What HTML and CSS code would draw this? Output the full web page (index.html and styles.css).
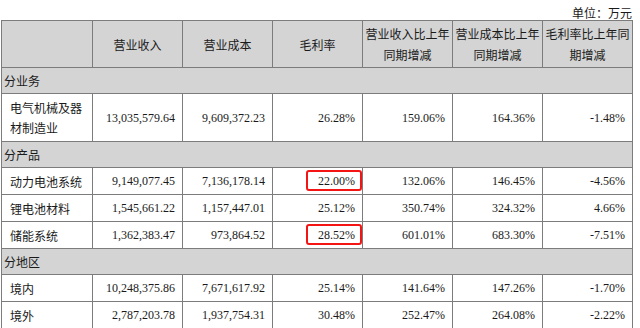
FILE: index.html
```html
<!DOCTYPE html>
<html lang="zh-CN">
<head>
  <meta charset="UTF-8" />
  <title>主营业务分行业、分产品、分地区情况</title>
  <link rel="stylesheet" href="styles.css">
</head>
<body>
  <div class="sheet">
    <div class="unit">单位：万元</div>
    <table class="report">
      <colgroup>
        <col class="c-name">
        <col class="c-num"><col class="c-num"><col class="c-num">
        <col class="c-num"><col class="c-num"><col class="c-num">
      </colgroup>
      <thead>
        <tr>
          <th></th>
          <th>营业收入</th>
          <th>营业成本</th>
          <th>毛利率</th>
          <th>营业收入比上年<br>同期增减</th>
          <th>营业成本比上年<br>同期增减</th>
          <th>毛利率比上年同<br>期增减</th>
        </tr>
      </thead>
      <tbody>
        <tr class="group"><td colspan="7">分业务</td></tr>
        <tr class="tall">
          <td class="name">电气机械及器<br>材制造业</td>
          <td>13,035,579.64</td><td>9,609,372.23</td><td>26.28%</td>
          <td>159.06%</td><td>164.36%</td><td>-1.48%</td>
        </tr>
        <tr class="group"><td colspan="7">分产品</td></tr>
        <tr>
          <td class="name">动力电池系统</td>
          <td>9,149,077.45</td><td>7,136,178.14</td><td><span class="mark">22.00%</span></td>
          <td>132.06%</td><td>146.45%</td><td>-4.56%</td>
        </tr>
        <tr>
          <td class="name">锂电池材料</td>
          <td>1,545,661.22</td><td>1,157,447.01</td><td>25.12%</td>
          <td>350.74%</td><td>324.32%</td><td>4.66%</td>
        </tr>
        <tr>
          <td class="name">储能系统</td>
          <td>1,362,383.47</td><td>973,864.52</td><td><span class="mark">28.52%</span></td>
          <td>601.01%</td><td>683.30%</td><td>-7.51%</td>
        </tr>
        <tr class="group"><td colspan="7">分地区</td></tr>
        <tr>
          <td class="name">境内</td>
          <td>10,248,375.86</td><td>7,671,617.92</td><td>25.14%</td>
          <td>141.64%</td><td>147.26%</td><td>-1.70%</td>
        </tr>
        <tr>
          <td class="name">境外</td>
          <td>2,787,203.78</td><td>1,937,754.31</td><td>30.48%</td>
          <td>252.47%</td><td>264.08%</td><td>-2.22%</td>
        </tr>
      </tbody>
    </table>
  </div>
</body>
</html>
```

FILE: styles.css
```css
body {
  margin: 0;
  background: #ffffff;
  color: #1a1a1a;
  font-family: "Noto Sans CJK SC", sans-serif;
  font-size: 12px;
}
.sheet {
  width: 631px;
  padding-left: 1px;
}
.unit {
  height: 17px;
  padding-top: 3px;
  line-height: 20px;
  text-align: right;
}
.report {
  width: 631px;
  border-collapse: collapse;
  table-layout: fixed;
}
.c-name {
  width: 91px;
}
.c-num {
  width: 90px;
}
.report th,
.report td {
  border: 1px solid #7c7c7c;
  padding: 0 7px 0 2px;
}
.report th {
  height: 46px;
  background: #d4d4d4;
  font-weight: normal;
  line-height: 21px;
  text-align: center;
  white-space: nowrap;
  padding: 0 2px;
}
.report td {
  height: 26px;
  text-align: right;
  font-family: "Liberation Serif", serif;
  font-size: 12px;
}
.report td.name {
  text-align: left;
  padding-left: 8px;
  font-family: "Noto Sans CJK SC", sans-serif;
}
.report tr.tall td {
  height: 47px;
  line-height: 20px;
}
.report tr.group td {
  height: 25px;
  background: #d4d4d4;
  text-align: left;
  padding-left: 2px;
  font-family: "Noto Sans CJK SC", sans-serif;
}
.mark {
  display: inline-block;
  line-height: 14px;
  padding: 2px 5px 1px 10px;
  margin: -4px -7px -4px -13px;
  border: 2px solid #f41414;
  border-radius: 3px;
}
```
